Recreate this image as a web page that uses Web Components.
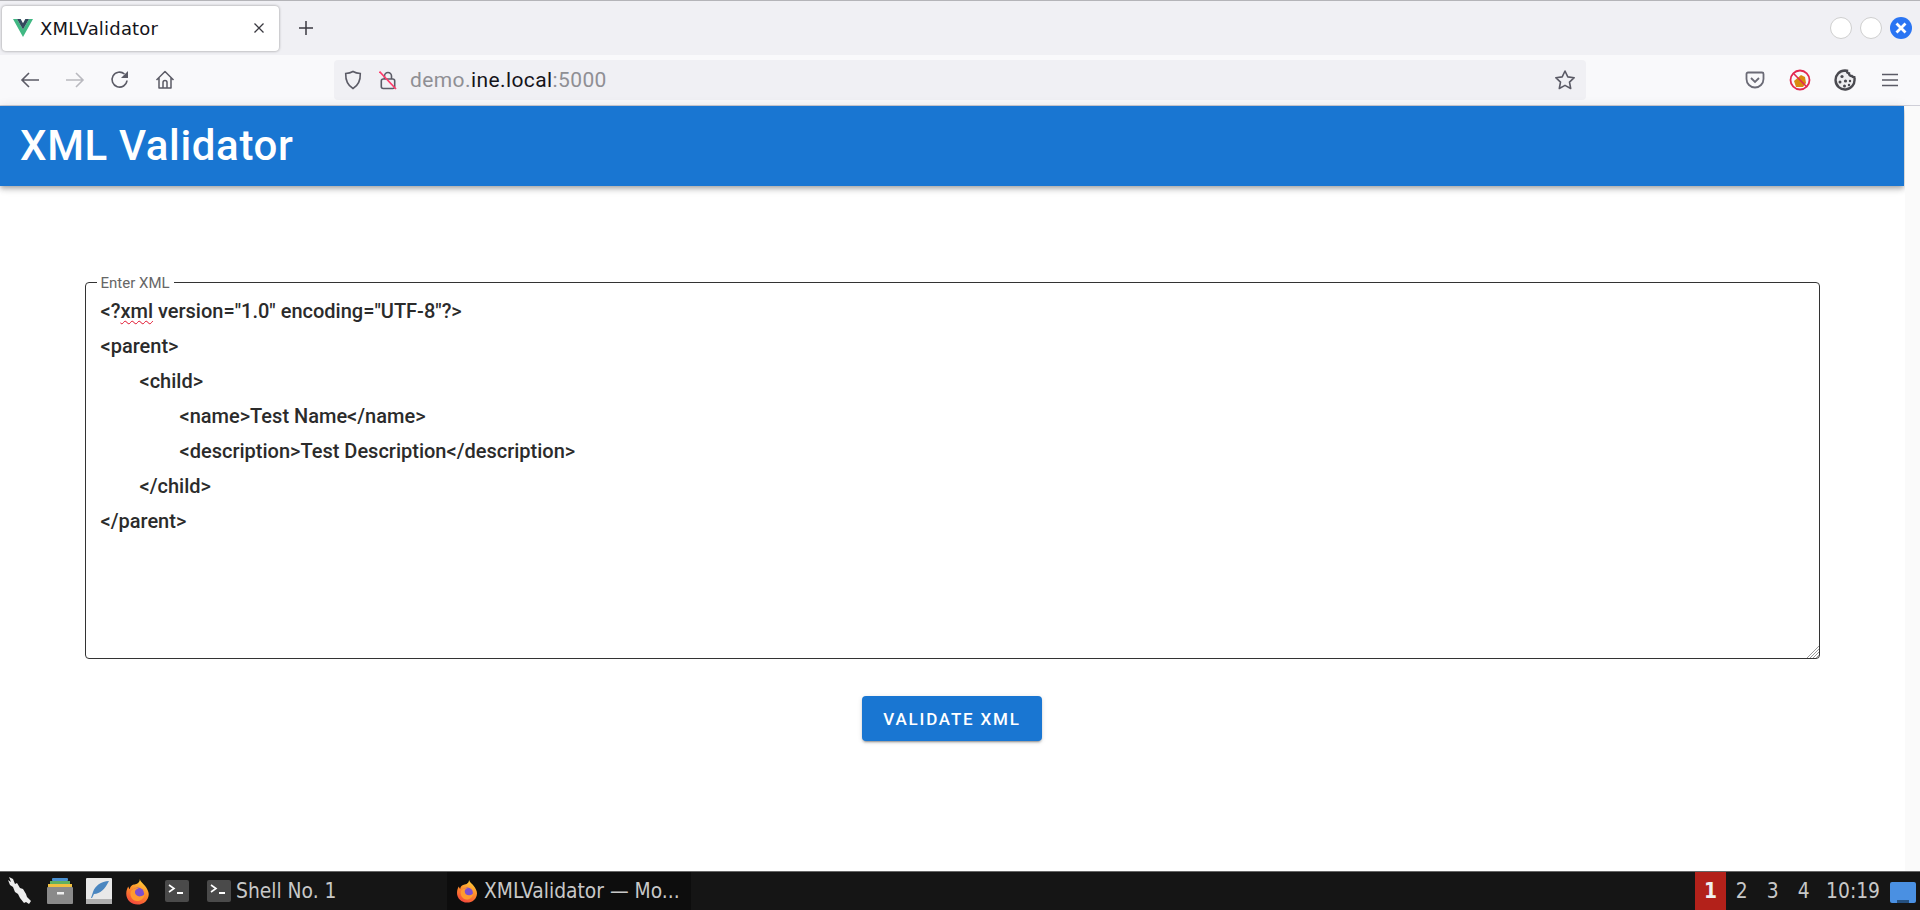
<!DOCTYPE html>
<html>
<head>
<meta charset="utf-8">
<title>XMLValidator</title>
<style>
html,body{margin:0;padding:0;height:910px;overflow:hidden;background:#fff}
body{display:flex;flex-direction:column;font-family:"Roboto",sans-serif}
page-view{flex:1}
</style>
</head>
<body>
<browser-chrome></browser-chrome>
<page-view>
    <app-bar>XML Validator</app-bar>
    <xml-field label="Enter XML"></xml-field>
    <app-button>VALIDATE XML</app-button>
</page-view>
<task-bar></task-bar>

<script>
const firefoxIcon=(id,size)=>`
<svg width="${size}" height="${size}" viewBox="0 0 24 24">
    <defs>
        <linearGradient id="${id}" x1="0.7" y1="0" x2="0.3" y2="1">
            <stop offset="0" stop-color="#ffd43a"/>
            <stop offset="0.5" stop-color="#ff8a2b"/>
            <stop offset="1" stop-color="#f2453d"/>
        </linearGradient>
    </defs>
    <path fill="url(#${id})" d="M14 0.8c.6 2.600 3 3.800 4.800 6.200 1.800 2.400 3.200 5 3.200 7.200C22 19.800 17.500 23.600 12 23.600S2 19.500 2 14c0-2.600.8-4.800 1.800-6.400.2 1 .7 1.800 1.300 2.300C5.500 7.500 7 6 8.800 5.800c2.500-.3 5.500-1.800 5.200-5z"/>
    <circle cx="12.300" cy="14" r="5.600" fill="#7c4fd0"/>
    <path fill="#ff9a2e" d="M6 12c1.500-2.200 4-3.500 7-3-2 .6-3.300 1.800-3.300 3.500 0 2.500 2.300 4.200 5 3.800 1.600-.2 2.900-1 3.800-2.300-.3 3.800-3.300 6.500-6.800 6.500C7.500 20.500 4.800 16 6 12z"/>
</svg>`

class TabItem extends HTMLElement{
    constructor(){
        super()
        this.attachShadow({mode:'open'})
    }
    connectedCallback(){
        this.shadowRoot.innerHTML=`
            <style>
                :host{
                    display:flex;
                    align-items:center;
                    width:277px;
                    height:45px;
                    box-sizing:border-box;
                    padding:0 14px 0 11px;
                    background:#fff;
                    border-radius:4px;
                    box-shadow:0 0 3px rgba(0,0,0,.4);
                    font:18px "DejaVu Sans",sans-serif;
                    letter-spacing:.2px;
                    color:#15141a;
                }
                svg{flex:none}
                .title{flex:1;margin-left:7px;white-space:nowrap}
            </style>
            <svg width="20" height="18" viewBox="0 0 18 16">
                <path fill="#41b883" d="M0 0h3.600L9 9.300 14.400 0H18L9 16z"/>
                <path fill="#34495e" d="M3.600 0h3.300L9 3.700 11.100 0h3.300L9 9.300z"/>
            </svg>
            <span class="title"><slot></slot></span>
            <svg width="12" height="12" viewBox="0 0 12 12" stroke="#3a3940" stroke-width="1.300" fill="none">
                <path d="M1.500 1.500l9 9M10.500 1.500l-9 9"/>
            </svg>
        `
    }
}
window.customElements.define('tab-item',TabItem)

class UrlBar extends HTMLElement{
    constructor(){
        super()
        this.attachShadow({mode:'open'})
    }
    connectedCallback(){
        this.shadowRoot.innerHTML=`
            <style>
                :host{
                    display:flex;
                    align-items:center;
                    width:1252px;
                    height:40px;
                    box-sizing:border-box;
                    padding:0 10px 0 10px;
                    background:#f0f0f4;
                    border-radius:4px;
                    font:21px "Roboto",sans-serif;
                    color:#8f8f94;
                }
                .lock{margin-left:17px}
                .url{flex:1;margin-left:13px;white-space:nowrap;letter-spacing:.4px}
                b{font-weight:400;color:#15141a}
            </style>
            <svg width="18" height="20" viewBox="0 0 18 20" fill="none" stroke="#5b5b66" stroke-width="1.600">
                <path d="M9 1.500c2.200 1.200 4.700 1.800 7.300 2 .2 6.300-1.800 11.800-7.300 15C3.500 15.300 1.500 9.800 1.700 3.500c2.600-.2 5.100-.8 7.300-2z"/>
            </svg>
            <svg class="lock" width="18" height="20" viewBox="0 0 18 20" fill="none">
                <path stroke="#5b5b66" stroke-width="1.600" d="M5.500 9V6a3.500 3.500 0 0 1 7 0v3"/>
                <rect x="2.300" y="9" width="13.400" height="9.500" rx="2" stroke="#5b5b66" stroke-width="1.600"/>
                <path stroke="#ff3b6b" stroke-width="1.700" d="M0.500 1.500L17 19"/>
            </svg>
            <span class="url">demo.<b>ine.local</b>:5000</span>
            <svg width="22" height="22" viewBox="0 0 22 22" fill="none" stroke="#5b5b66" stroke-width="1.600" stroke-linejoin="round">
                <path d="M11 2l2.800 5.900 6.400.8-4.700 4.400 1.200 6.400L11 16.400l-5.700 3.100 1.200-6.400L1.800 8.700l6.400-.8z"/>
            </svg>
        `
    }
}
window.customElements.define('url-bar',UrlBar)

class BrowserChrome extends HTMLElement{
    constructor(){
        super()
        this.attachShadow({mode:'open'})
    }
    connectedCallback(){
        this.shadowRoot.innerHTML=`
            <style>
                :host{display:block;flex:none}
                .tabs{
                    display:flex;
                    align-items:center;
                    height:55px;
                    box-sizing:border-box;
                    padding:0 4px 0 2px;
                    background:#f0f0f4;
                    border-top:1px solid #b4b4b8;
                }
                .plus{margin-left:19px;flex:1;display:flex}
                .win{display:flex;gap:8px;margin-right:4px}
                .win span{
                    width:22px;
                    height:22px;
                    box-sizing:border-box;
                    border-radius:50%;
                    background:#fff;
                    border:1px solid #cfcfcf;
                    display:block;
                }
                .win span.close{
                    background:#2a75f3;
                    border:0;
                    display:flex;
                    align-items:center;
                    justify-content:center;
                }
                .tools{
                    display:flex;
                    align-items:center;
                    height:51px;
                    box-sizing:border-box;
                    background:#f9f9fb;
                    border-bottom:1px solid #cfcfd8;
                }
                .btn{
                    width:45px;
                    height:40px;
                    display:flex;
                    align-items:center;
                    justify-content:center;
                    flex:none;
                }
                .left{margin-left:7px;margin-right:147px;display:flex}
                .right{margin-left:146px;display:flex}
            </style>
            <div class="tabs">
                <tab-item>XMLValidator</tab-item>
                <span class="plus">
                    <svg width="16" height="16" viewBox="0 0 16 16" stroke="#3a3940" stroke-width="1.500"><path d="M8 1v14M1 8h14"/></svg>
                </span>
                <div class="win">
                    <span></span>
                    <span></span>
                    <span class="close">
                        <svg width="12" height="12" viewBox="0 0 12 12" stroke="#fff" stroke-width="2.800"><path d="M1.500 1.500l9 9M10.500 1.500l-9 9"/></svg>
                    </span>
                </div>
            </div>
            <div class="tools">
                <div class="left">
                    <span class="btn">
                        <svg width="20" height="18" viewBox="0 0 20 18" fill="none" stroke="#5b5b66" stroke-width="1.600"><path d="M19 9H2M9 2L2 9l7 7"/></svg>
                    </span>
                    <span class="btn">
                        <svg width="20" height="18" viewBox="0 0 20 18" fill="none" stroke="#b9b9bf" stroke-width="1.600"><path d="M1 9h17M11 2l7 7-7 7"/></svg>
                    </span>
                    <span class="btn">
                        <svg width="20" height="20" viewBox="0 0 20 20" fill="none" stroke="#5b5b66" stroke-width="1.600"><path d="M17 10.500A7.500 7.500 0 1 1 14.500 4"/><path fill="#5b5b66" stroke="none" d="M18 1v7h-7z"/></svg>
                    </span>
                    <span class="btn">
                        <svg width="20" height="20" viewBox="0 0 20 20" fill="none" stroke="#5b5b66" stroke-width="1.500" stroke-linejoin="round"><path d="M1.500 10L10 1.500 18.500 10M4 8v10h12V8M8 18v-5.500a2 2 0 0 1 4 0V18"/></svg>
                    </span>
                </div>
                <url-bar></url-bar>
                <div class="right">
                    <span class="btn">
                        <svg width="20" height="18" viewBox="0 0 20 18" fill="none" stroke="#6b6b76" stroke-width="1.800"><path d="M3 1.500h14A1.500 1.500 0 0 1 18.500 3v5a8.500 8.500 0 0 1-17 0V3A1.500 1.500 0 0 1 3 1.500z"/><path stroke-width="1.800" d="M6 7l4 4 4-4"/></svg>
                    </span>
                    <span class="btn">
                        <svg width="22" height="22" viewBox="0 0 22 22" fill="none">
                            <path fill="#d98a10" d="M5 12l7-6 4 2 1 6-3 4H7z"/>
                            <circle cx="11" cy="11" r="9.500" stroke="#e22850" stroke-width="1.800"/>
                            <path stroke="#e22850" stroke-width="1.600" d="M4.300 4.300l13.400 13.400"/>
                        </svg>
                    </span>
                    <span class="btn">
                        <svg width="22" height="22" viewBox="0 0 22 22">
                            <path fill="#eeeef0" stroke="#4a4a50" stroke-width="2.400" d="M11 1.500c.7 0 1.400.1 2 .2-.2 1.400.7 2.500 2 2.700 0 1.600 1.300 2.700 2.800 2.600.5.700 1.300 1.100 2.500 1.200.1.600.2 1.200.2 1.800a9.500 9.500 0 1 1-9.500-8.500z"/>
                            <circle cx="8" cy="7.500" r="1.600" fill="#4a4a50"/>
                            <circle cx="6" cy="13" r="1.500" fill="#4a4a50"/>
                            <circle cx="11.500" cy="12" r="1.600" fill="#4a4a50"/>
                            <circle cx="16" cy="12" r="1.200" fill="#4a4a50"/>
                            <circle cx="10.500" cy="17" r="1.500" fill="#4a4a50"/>
                            <circle cx="15" cy="16" r="1.200" fill="#4a4a50"/>
                        </svg>
                    </span>
                    <span class="btn">
                        <svg width="16" height="14" viewBox="0 0 16 14" stroke="#5b5b66" stroke-width="1.600"><path d="M0 1.500h16M0 7h16M0 12.500h16"/></svg>
                    </span>
                </div>
            </div>
        `
    }
}
window.customElements.define('browser-chrome',BrowserChrome)

class PageView extends HTMLElement{
    constructor(){
        super()
        this.attachShadow({mode:'open'})
    }
    connectedCallback(){
        this.shadowRoot.innerHTML=`
            <style>
                :host{
                    display:flex;
                    flex-direction:column;
                    align-items:center;
                    min-height:0;
                    background:#fff;
                    box-sizing:border-box;
                    padding-right:16px;
                    position:relative;
                }
                .gutter{
                    position:absolute;
                    top:0;
                    right:0;
                    bottom:0;
                    width:15px;
                    background:#fafafa;
                }
            </style>
            <slot></slot>
            <div class="gutter"></div>
        `
    }
}
window.customElements.define('page-view',PageView)

class AppBar extends HTMLElement{
    constructor(){
        super()
        this.attachShadow({mode:'open'})
    }
    connectedCallback(){
        this.shadowRoot.innerHTML=`
            <style>
                :host{
                    display:flex;
                    align-items:center;
                    align-self:stretch;
                    height:80px;
                    box-sizing:border-box;
                    padding:0 20px;
                    background:#1976d2;
                    color:#fff;
                    font:500 42px/1 "Roboto",sans-serif;
                    letter-spacing:.65px;
                    box-shadow:0 2px 4px -1px rgba(0,0,0,.2),0 4px 5px rgba(0,0,0,.14),0 1px 10px rgba(0,0,0,.12);
                }
            </style>
            <slot></slot>
        `
    }
}
window.customElements.define('app-bar',AppBar)

class XmlField extends HTMLElement{
    constructor(){
        super()
        this.attachShadow({mode:'open'})
    }
    connectedCallback(){
        const label=this.getAttribute('label')
        this.shadowRoot.innerHTML=`
            <style>
                :host{
                    display:block;
                    width:1735px;
                    margin-top:87px;
                    position:relative;
                }
                fieldset{
                    margin:0;
                    height:386px;
                    box-sizing:border-box;
                    padding:3px 14px 0 15px;
                    border:1px solid #333;
                    border-radius:4px;
                }
                legend{
                    margin-left:-4px;
                    padding:0 4px;
                    font:15px "Roboto",sans-serif;
                    color:#666;
                    position:relative;
                    top:1px;
                }
                .line{
                    height:35px;
                    font:500 20px/35px "Roboto",sans-serif;
                    color:#2b2b2b;
                    white-space:pre;
                }
                .l1{padding-left:39px}
                .l2{padding-left:79px}
                .typo{text-decoration:underline wavy #e0112b 1.300px;text-underline-offset:2px}
                .grip{position:absolute;right:1px;bottom:1px}
            </style>
            <fieldset>
                <legend>${label}</legend>
                <div class="line">&lt;?<span class="typo">xml</span> version="1.0" encoding="UTF-8"?&gt;</div>
                <div class="line">&lt;parent&gt;</div>
                <div class="line l1">&lt;child&gt;</div>
                <div class="line l2">&lt;name&gt;Test Name&lt;/name&gt;</div>
                <div class="line l2">&lt;description&gt;Test Description&lt;/description&gt;</div>
                <div class="line l1">&lt;/child&gt;</div>
                <div class="line">&lt;/parent&gt;</div>
            </fieldset>
            <svg class="grip" width="13" height="13" viewBox="0 0 13 13" stroke="#9a9a9a" stroke-width="1">
                <path d="M13 1L1 13M13 4L4 13M13 7L7 13M13 10L10 13"/>
            </svg>
        `
    }
}
window.customElements.define('xml-field',XmlField)

class AppButton extends HTMLElement{
    constructor(){
        super()
        this.attachShadow({mode:'open'})
    }
    connectedCallback(){
        this.shadowRoot.innerHTML=`
            <style>
                :host{
                    display:flex;
                    align-items:center;
                    justify-content:center;
                    width:180px;
                    height:45px;
                    margin-top:37px;
                    background:#1976d2;
                    color:#fff;
                    border-radius:4px;
                    font:500 17px "Roboto",sans-serif;
                    letter-spacing:1.800px;
                    box-shadow:0 3px 1px -2px rgba(0,0,0,.2),0 2px 2px rgba(0,0,0,.14),0 1px 5px rgba(0,0,0,.12);
                }
            </style>
            <slot></slot>
        `
    }
}
window.customElements.define('app-button',AppButton)

class TaskBar extends HTMLElement{
    constructor(){
        super()
        this.attachShadow({mode:'open'})
    }
    connectedCallback(){
        const term=`<svg width="24" height="22" viewBox="0 0 24 22"><rect width="24" height="22" rx="2" fill="#4a4a4a"/><path d="M4 5l5 3.500-5 3.500" fill="none" stroke="#fff" stroke-width="1.600"/><path d="M12 13h6" stroke="#fff" stroke-width="2"/></svg>`
        this.shadowRoot.innerHTML=`
            <style>
                :host{
                    display:flex;
                    align-items:stretch;
                    flex:none;
                    height:39px;
                    box-sizing:border-box;
                    background:#151515;
                    border-top:1px solid #666;
                    font:20.800px "DejaVu Sans",sans-serif;
                    font-stretch:condensed;
                    color:#c8c8c8;
                    white-space:nowrap;
                }
                .launch{display:flex;align-items:center;width:39px;justify-content:center;flex:none}
                .launch.s2{margin-left:1px}
                .task{display:flex;align-items:center;gap:5px;flex:none}
                .shell{margin-left:8px;width:243px;padding-left:3px;box-sizing:border-box}
                .active{width:244px;padding-left:8px;box-sizing:border-box;background:#0d0d0d}
                .spacer{flex:1}
                .num{width:31px;display:flex;align-items:center;justify-content:center;flex:none}
                .num.on{background:#b3211a;color:#f0f0f0;font-weight:bold}
                .clock{margin-left:7px;display:flex;align-items:center;flex:none}
                .desk{margin:10px 4px 6px 10px;width:26px;height:21px;flex:none;background:#4a90e2;border-radius:2px;position:relative}
                .desk::after{content:"";position:absolute;left:7px;right:7px;bottom:0;height:3px;background:#25507f}
            </style>
            <span class="launch">
                <svg width="28" height="30" viewBox="0 0 28 30" fill="#eee">
                    <path d="M3 1l4 2 2 5 2-1 3 5 3 1 3 5 1 3 4 4-2 3-3-2-2 1-4-5-2-4-3-2-2-5-3-2-2-5 3 2z"/>
                </svg>
            </span>
            <span class="launch s2">
                <svg width="26" height="26" viewBox="0 0 26 26">
                    <rect x="5" y="0" width="16" height="3" rx="1" fill="#4a90d0"/>
                    <rect x="3" y="3" width="20" height="3" fill="#60b060"/>
                    <rect x="1" y="6" width="24" height="3" fill="#f0c040"/>
                    <rect x="0" y="9" width="26" height="17" rx="1" fill="#8a8a8a"/>
                    <rect x="10" y="14" width="7" height="2.500" fill="#eee"/>
                </svg>
            </span>
            <span class="launch">
                <svg width="26" height="26" viewBox="0 0 26 26">
                    <rect width="26" height="26" rx="1" fill="#e8e8e8"/>
                    <rect y="21" width="26" height="5" fill="#b0b0b0"/>
                    <path fill="#4a86c0" d="M23 3C15 3 9 8 7 14l-2 6 1 0 2-4c6 0 11-5 15-13z"/>
                </svg>
            </span>
            <span class="launch">${firefoxIcon('ffa',27)}</span>
            <span class="launch">${term}</span>
            <span class="task shell">${term}<span>Shell No. 1</span></span>
            <span class="task active">${firefoxIcon('ffb',24)}<span>XMLValidator — Mo...</span></span>
            <span class="spacer"></span>
            <span class="num on">1</span>
            <span class="num">2</span>
            <span class="num">3</span>
            <span class="num">4</span>
            <span class="clock">10:19</span>
            <span class="desk"></span>
        `
    }
}
window.customElements.define('task-bar',TaskBar)
</script>
</body>
</html>
